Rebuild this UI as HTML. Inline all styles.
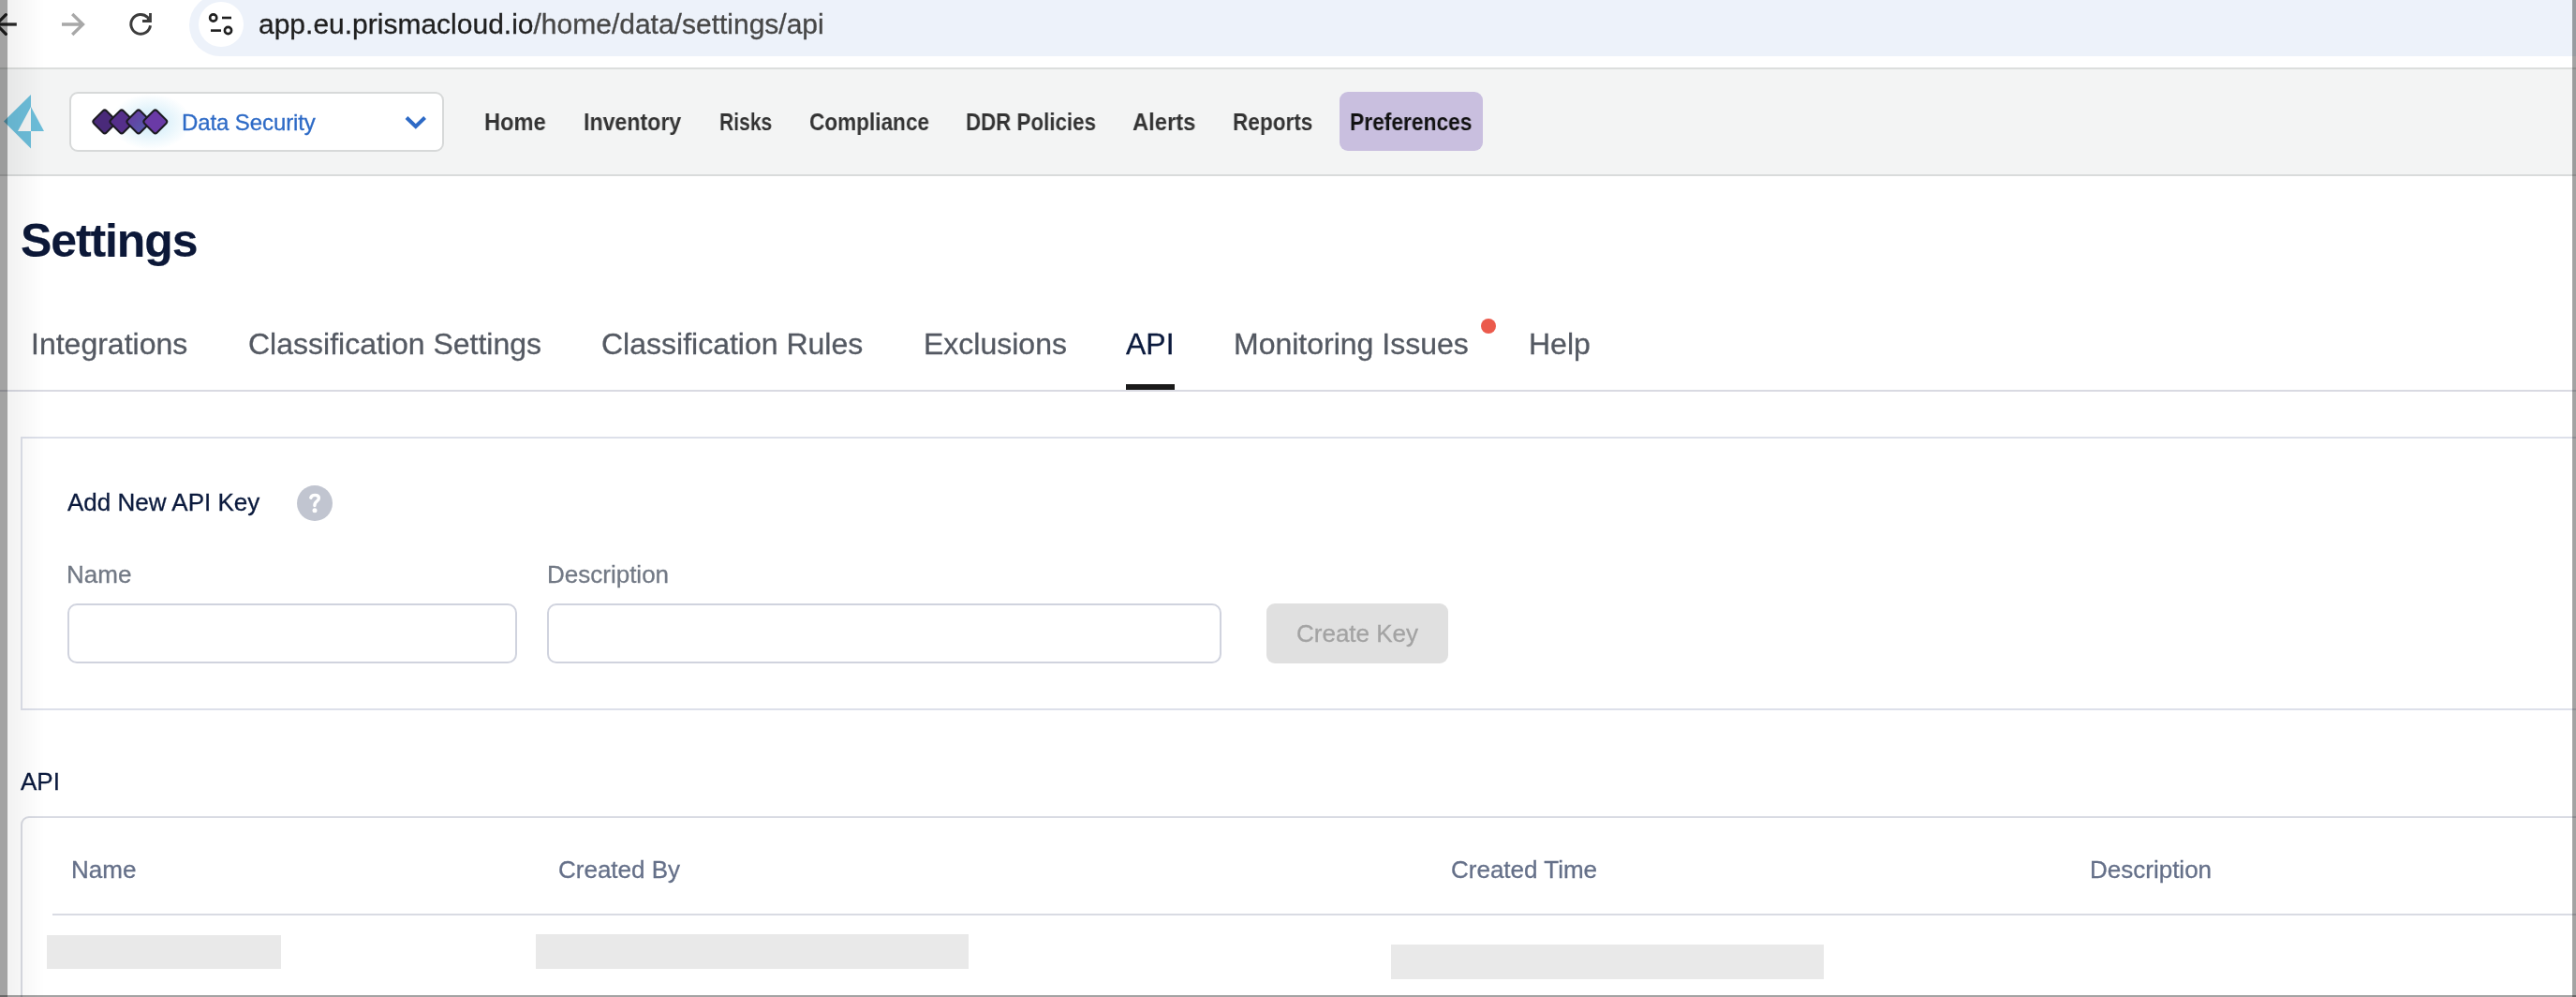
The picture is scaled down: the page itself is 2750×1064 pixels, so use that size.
<!DOCTYPE html>
<html><head><meta charset="utf-8">
<style>
html,body{margin:0;padding:0;width:2750px;height:1064px;overflow:hidden;background:#fff;position:relative;font-family:"Liberation Sans",sans-serif;}
.a{position:absolute;}
.t{position:absolute;white-space:nowrap;line-height:1;will-change:transform;-webkit-text-stroke:0.3px currentColor;}
</style></head><body>

<!-- ===== Browser toolbar ===== -->
<div class="a" style="left:0;top:0;width:2750px;height:72px;background:#fff"></div>
<div class="a" style="left:202px;top:-6px;width:2600px;height:66px;border-radius:33px;background:#edf2fa"></div>
<div class="a" style="left:212px;top:2px;width:48px;height:48px;border-radius:50%;background:#fff"></div>
<!-- tune icon -->
<svg class="a" style="left:212px;top:2px" width="48" height="48" viewBox="0 0 48 48">
  <circle cx="15.7" cy="17" r="3.6" fill="none" stroke="#1f1f1f" stroke-width="2.6"/>
  <line x1="25" y1="17" x2="35" y2="17" stroke="#1f1f1f" stroke-width="2.6"/>
  <line x1="13" y1="30.6" x2="24" y2="30.6" stroke="#1f1f1f" stroke-width="2.6"/>
  <circle cx="31.5" cy="30.5" r="3.6" fill="none" stroke="#1f1f1f" stroke-width="2.6"/>
</svg>
<div class="t" style="left:276px;top:11px;font-size:30px;color:#1f1f1f">app.eu.prismacloud.io<span style="color:#474747">/home/data/settings/api</span></div>
<!-- back / forward / reload -->
<svg class="a" style="left:0;top:0" width="180" height="60" viewBox="0 0 180 60">
  <path d="M17.8 26 H-3" fill="none" stroke="#262626" stroke-width="3.3"/><path d="M6.3 15.7 L-4 26 L6.3 36.3" fill="none" stroke="#262626" stroke-width="3.3" stroke-linecap="round"/>
  <path d="M66 26 H88.5 M77.2 15 L88.5 26 L77.2 37" fill="none" stroke="#a8a8a8" stroke-width="3.3"/>
  <path d="M160.5 27.3 A10.4 10.4 0 1 1 157.5 18.4" fill="none" stroke="#3c3c3c" stroke-width="3"/>
  <polygon points="159.1,14 161.9,14 161.9,23.9 152,23.9 152,21 159.1,21" fill="#3c3c3c"/>
  <polygon points="156.5,18.5 159.5,17 159.5,21.5 157,21.5" fill="#3c3c3c"/>
</svg>
<div class="a" style="left:0;top:72px;width:2750px;height:2px;background:#dcdedd"></div>

<!-- ===== App nav bar ===== -->
<div class="a" style="left:0;top:74px;width:2750px;height:112px;background:#f3f4f4"></div>
<div class="a" style="left:0;top:186px;width:2750px;height:2px;background:#d9dbdb"></div>
<!-- prisma logo -->
<svg class="a" style="left:0;top:95px" width="60" height="70" viewBox="0 95 60 70">
  <polygon points="4,129.5 33,101 33,114 19,140 33,140 33,158.5" fill="#6cbdd9"/>
  <polygon points="33,114 47,140 33,140" fill="#6cbdd9"/>
</svg>
<!-- product switcher -->
<div class="a" style="left:74px;top:98px;width:396px;height:60px;border:2px solid #d7d9d9;border-radius:9px;background:#fff"></div>
<div class="a" style="left:118px;top:100px;width:86px;height:60px;background:radial-gradient(closest-side,rgba(150,212,240,.5),rgba(150,212,240,.2) 60%,rgba(150,212,240,0))"></div>
<svg class="a" style="left:90px;top:105px" width="110" height="50" viewBox="90 105 110 50">
  <defs><linearGradient id="g3" x1="0" x2="1" y1="0" y2="0"><stop offset="0" stop-color="#6440a2"/><stop offset="1" stop-color="#5757ab"/></linearGradient></defs>
  <g stroke="#1c1b22" stroke-width="2">
    <rect x="102.3" y="120.35" width="19" height="19" rx="2.6" transform="rotate(45 111.8 129.85)" fill="#4a2a7a"/><rect x="120.4" y="120.35" width="19" height="19" rx="2.6" transform="rotate(45 129.9 129.85)" fill="#552f8a"/><rect x="138.4" y="120.35" width="19" height="19" rx="2.6" transform="rotate(45 147.9 129.85)" fill="url(#g3)"/><rect x="156.3" y="120.35" width="19" height="19" rx="2.6" transform="rotate(45 165.8 129.85)" fill="#6a3aa6"/>
  </g>
</svg>
<div class="t" style="left:194px;top:119px;font-size:24px;letter-spacing:-0.1px;color:#2d6ac6">Data Security</div>
<svg class="a" style="left:428px;top:118px" width="32" height="24" viewBox="0 0 32 24">
  <path d="M6 7.5 L15.8 17 L25.6 7.5" fill="none" stroke="#2d6ac6" stroke-width="4"/>
</svg>
<!-- nav items -->
<div class="a" style="left:1430px;top:98px;width:153px;height:63px;border-radius:9px;background:#c9bfdf"></div>

<div class="t" style="left:517.2px;top:118px;font-size:25px;font-weight:bold;color:#333;-webkit-text-stroke:0;transform:scaleX(0.9468);transform-origin:0 0">Home</div>
<div class="t" style="left:623.0px;top:118px;font-size:25px;font-weight:bold;color:#333;-webkit-text-stroke:0;transform:scaleX(0.9265);transform-origin:0 0">Inventory</div>
<div class="t" style="left:768.4px;top:118px;font-size:25px;font-weight:bold;color:#333;-webkit-text-stroke:0;transform:scaleX(0.8421);transform-origin:0 0">Risks</div>
<div class="t" style="left:863.8px;top:118px;font-size:25px;font-weight:bold;color:#333;-webkit-text-stroke:0;transform:scaleX(0.9033);transform-origin:0 0">Compliance</div>
<div class="t" style="left:1031.0px;top:118px;font-size:25px;font-weight:bold;color:#333;-webkit-text-stroke:0;transform:scaleX(0.8929);transform-origin:0 0">DDR Policies</div>
<div class="t" style="left:1209.1px;top:118px;font-size:25px;font-weight:bold;color:#333;-webkit-text-stroke:0;transform:scaleX(0.9498);transform-origin:0 0">Alerts</div>
<div class="t" style="left:1316.2px;top:118px;font-size:25px;font-weight:bold;color:#333;-webkit-text-stroke:0;transform:scaleX(0.9040);transform-origin:0 0">Reports</div>
<div class="t" style="left:1441.0px;top:118px;font-size:25px;font-weight:bold;color:#111;-webkit-text-stroke:0;transform:scaleX(0.9111);transform-origin:0 0">Preferences</div>

<!-- ===== Page ===== -->
<div class="t" style="left:22px;top:232px;font-size:50px;letter-spacing:-1.1px;font-weight:bold;color:#0c1838;-webkit-text-stroke:0.1px currentColor">Settings</div>

<div class="t" style="left:33px;top:351px;font-size:32px;color:#545962">Integrations</div>
<div class="t" style="left:265px;top:351px;font-size:32px;color:#545962">Classification Settings</div>
<div class="t" style="left:642px;top:351px;font-size:32px;color:#545962">Classification Rules</div>
<div class="t" style="left:985.8px;top:351px;font-size:32px;color:#545962">Exclusions</div>
<div class="t" style="left:1202px;top:351px;font-size:32px;color:#0b1a3d">API</div>
<div class="t" style="left:1317px;top:351px;font-size:32px;color:#545962">Monitoring Issues</div>
<div class="t" style="left:1632px;top:351px;font-size:32px;color:#545962">Help</div>
<div class="a" style="left:1581px;top:340px;width:16px;height:16px;border-radius:50%;background:#eb5a4c"></div>
<div class="a" style="left:0;top:416px;width:2750px;height:2px;background:#d9dae2"></div>
<div class="a" style="left:1202px;top:410px;width:52px;height:6px;background:#1a1a1a"></div>

<!-- Add key card -->
<div class="a" style="left:22px;top:466px;width:2800px;height:288px;border:2px solid #dde0ea;background:#fff"></div>
<div class="t" style="left:72px;top:523px;font-size:26px;color:#0b1a3d">Add New API Key</div>
<div class="a" style="left:317px;top:518px;width:38px;height:38px;border-radius:50%;background:#c1c5d0"></div>
<svg class="a" style="left:310px;top:512px" width="52" height="50" viewBox="310 512 52 50">
  <path d="M331.8 531.2 Q332.6 528.4 336.2 528.4 Q340.4 528.4 340.4 531.6 Q340.4 533.6 338.1 535.1 Q335.9 536.6 335.9 539.6" fill="none" stroke="#fff" stroke-width="3.4" stroke-linecap="round" stroke-linejoin="round"/>
  <circle cx="336" cy="544.7" r="2.5" fill="#fff"/>
</svg>
<div class="t" style="left:71px;top:600px;font-size:26px;color:#727985">Name</div>
<div class="t" style="left:584px;top:600px;font-size:26px;color:#727985">Description</div>
<div class="a" style="left:72px;top:644px;width:476px;height:60px;border:2px solid #d0d3de;border-radius:10px;background:#fff"></div>
<div class="a" style="left:584px;top:644px;width:716px;height:60px;border:2px solid #d0d3de;border-radius:10px;background:#fff"></div>
<div class="a" style="left:1352px;top:644px;width:194px;height:64px;border-radius:9px;background:#e0e0e0"></div>
<div class="t" style="left:1383.6px;top:663px;font-size:26px;color:#a3a3a3">Create Key</div>

<!-- API table -->
<div class="t" style="left:22px;top:821px;font-size:26px;color:#0b1a3d">API</div>
<div class="a" style="left:22px;top:871px;width:2800px;height:400px;border:2px solid #d9dbe3;border-radius:9px;background:#fff"></div>
<div class="t" style="left:76px;top:915px;font-size:26px;color:#657089">Name</div>
<div class="t" style="left:596px;top:915px;font-size:26px;color:#657089">Created By</div>
<div class="t" style="left:1549px;top:915px;font-size:26px;color:#657089">Created Time</div>
<div class="t" style="left:2231px;top:915px;font-size:26px;color:#657089">Description</div>
<div class="a" style="left:56px;top:975px;width:2750px;height:2px;background:#d9dbe3"></div>
<div class="a" style="left:50px;top:998px;width:250px;height:36px;background:#e9e9e9"></div>
<div class="a" style="left:572px;top:997px;width:462px;height:37px;background:#e9e9e9"></div>
<div class="a" style="left:1485px;top:1008px;width:462px;height:37px;background:#e9e9e9"></div>

<!-- window edge overlays -->
<div class="a" style="left:8px;top:0;width:40px;height:1064px;background:linear-gradient(to right,rgba(0,0,0,.05),rgba(0,0,0,0))"></div>
<div class="a" style="left:0;top:0;width:8px;height:1064px;background:rgba(0,0,0,.36)"></div>
<div class="a" style="left:2746px;top:0;width:4px;height:1064px;background:rgba(0,0,0,.36)"></div>
<div class="a" style="left:0;top:1062px;width:2750px;height:2px;background:rgba(0,0,0,.36)"></div>
</body></html>
